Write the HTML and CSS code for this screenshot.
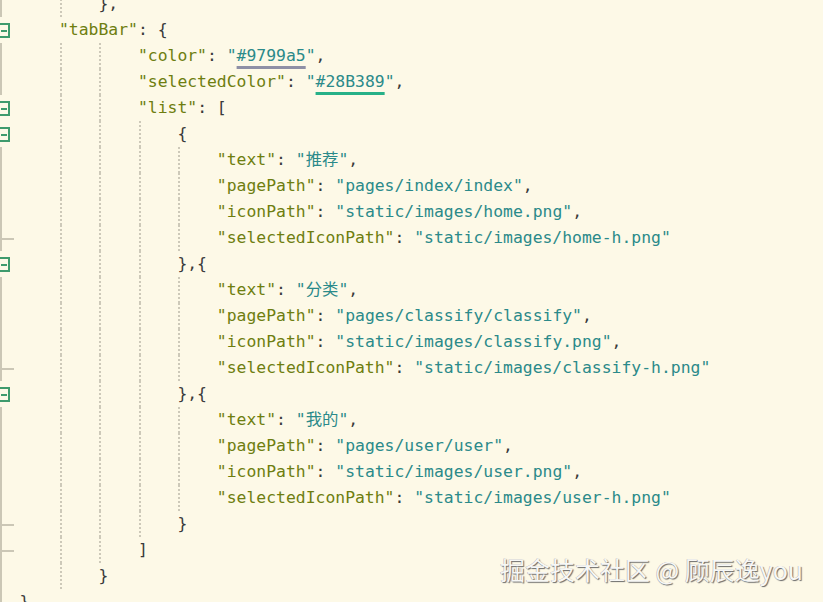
FILE: index.html
```html
<!DOCTYPE html>
<html lang="zh">
<head>
<meta charset="utf-8">
<title>pages.json</title>
<link rel="stylesheet" href="styles.css">
</head>
<body>
<div class="editor">
  <div class="line"><span class="gut vl"></span><span class="code"><span class="ind"></span><span class="ind g"></span><span class="p">},</span></span></div>
  <div class="line"><span class="gut"><span class="fold"></span></span><span class="code"><span class="ind"></span><span class="k">"tabBar"</span><span class="p">: {</span></span></div>
  <div class="line"><span class="gut vl"></span><span class="code"><span class="ind"></span><span class="ind g"></span><span class="ind g"></span><span class="k">"color"</span><span class="p">: </span><span class="s">"<span class="cu cu1">#9799a5</span>"</span><span class="p">,</span></span></div>
  <div class="line"><span class="gut vl"></span><span class="code"><span class="ind"></span><span class="ind g"></span><span class="ind g"></span><span class="k">"selectedColor"</span><span class="p">: </span><span class="s">"<span class="cu cu2">#28B389</span>"</span><span class="p">,</span></span></div>
  <div class="line"><span class="gut"><span class="fold"></span></span><span class="code"><span class="ind"></span><span class="ind g"></span><span class="ind g"></span><span class="k">"list"</span><span class="p">: [</span></span></div>
  <div class="line"><span class="gut"><span class="fold"></span></span><span class="code"><span class="ind"></span><span class="ind g"></span><span class="ind g"></span><span class="ind g"></span><span class="p">{</span></span></div>
  <div class="line"><span class="gut vl"></span><span class="code"><span class="ind"></span><span class="ind g"></span><span class="ind g"></span><span class="ind g"></span><span class="ind g"></span><span class="k">"text"</span><span class="p">: </span><span class="s">"推荐"</span><span class="p">,</span></span></div>
  <div class="line"><span class="gut vl"></span><span class="code"><span class="ind"></span><span class="ind g"></span><span class="ind g"></span><span class="ind g"></span><span class="ind g"></span><span class="k">"pagePath"</span><span class="p">: </span><span class="s">"pages/index/index"</span><span class="p">,</span></span></div>
  <div class="line"><span class="gut vl"></span><span class="code"><span class="ind"></span><span class="ind g"></span><span class="ind g"></span><span class="ind g"></span><span class="ind g"></span><span class="k">"iconPath"</span><span class="p">: </span><span class="s">"static/images/home.png"</span><span class="p">,</span></span></div>
  <div class="line"><span class="gut vl tick"></span><span class="code"><span class="ind"></span><span class="ind g"></span><span class="ind g"></span><span class="ind g"></span><span class="ind g"></span><span class="k">"selectedIconPath"</span><span class="p">: </span><span class="s">"static/images/home-h.png"</span></span></div>
  <div class="line"><span class="gut"><span class="fold"></span></span><span class="code"><span class="ind"></span><span class="ind g"></span><span class="ind g"></span><span class="ind g"></span><span class="p">},{</span></span></div>
  <div class="line"><span class="gut vl"></span><span class="code"><span class="ind"></span><span class="ind g"></span><span class="ind g"></span><span class="ind g"></span><span class="ind g"></span><span class="k">"text"</span><span class="p">: </span><span class="s">"分类"</span><span class="p">,</span></span></div>
  <div class="line"><span class="gut vl"></span><span class="code"><span class="ind"></span><span class="ind g"></span><span class="ind g"></span><span class="ind g"></span><span class="ind g"></span><span class="k">"pagePath"</span><span class="p">: </span><span class="s">"pages/classify/classify"</span><span class="p">,</span></span></div>
  <div class="line"><span class="gut vl"></span><span class="code"><span class="ind"></span><span class="ind g"></span><span class="ind g"></span><span class="ind g"></span><span class="ind g"></span><span class="k">"iconPath"</span><span class="p">: </span><span class="s">"static/images/classify.png"</span><span class="p">,</span></span></div>
  <div class="line"><span class="gut vl tick"></span><span class="code"><span class="ind"></span><span class="ind g"></span><span class="ind g"></span><span class="ind g"></span><span class="ind g"></span><span class="k">"selectedIconPath"</span><span class="p">: </span><span class="s">"static/images/classify-h.png"</span></span></div>
  <div class="line"><span class="gut"><span class="fold"></span></span><span class="code"><span class="ind"></span><span class="ind g"></span><span class="ind g"></span><span class="ind g"></span><span class="p">},{</span></span></div>
  <div class="line"><span class="gut vl"></span><span class="code"><span class="ind"></span><span class="ind g"></span><span class="ind g"></span><span class="ind g"></span><span class="ind g"></span><span class="k">"text"</span><span class="p">: </span><span class="s">"我的"</span><span class="p">,</span></span></div>
  <div class="line"><span class="gut vl"></span><span class="code"><span class="ind"></span><span class="ind g"></span><span class="ind g"></span><span class="ind g"></span><span class="ind g"></span><span class="k">"pagePath"</span><span class="p">: </span><span class="s">"pages/user/user"</span><span class="p">,</span></span></div>
  <div class="line"><span class="gut vl"></span><span class="code"><span class="ind"></span><span class="ind g"></span><span class="ind g"></span><span class="ind g"></span><span class="ind g"></span><span class="k">"iconPath"</span><span class="p">: </span><span class="s">"static/images/user.png"</span><span class="p">,</span></span></div>
  <div class="line"><span class="gut vl"></span><span class="code"><span class="ind"></span><span class="ind g"></span><span class="ind g"></span><span class="ind g"></span><span class="ind g"></span><span class="k">"selectedIconPath"</span><span class="p">: </span><span class="s">"static/images/user-h.png"</span></span></div>
  <div class="line"><span class="gut vl tick"></span><span class="code"><span class="ind"></span><span class="ind g"></span><span class="ind g"></span><span class="ind g"></span><span class="p">}</span></span></div>
  <div class="line"><span class="gut vl tick"></span><span class="code"><span class="ind"></span><span class="ind g"></span><span class="ind g"></span><span class="p">]</span></span></div>
  <div class="line"><span class="gut vl"></span><span class="code"><span class="ind"></span><span class="ind g"></span><span class="p">}</span></span></div>
  <div class="line"><span class="gut vl tick"></span><span class="code"><span class="p">}</span></span></div>
</div>
<div class="watermark">掘金技术社区 @ 顾辰逸you</div>
</body>
</html>
```

FILE: styles.css
```css
html, body {
  margin: 0;
  padding: 0;
  background: #fdf9e7;
  overflow: hidden;
  height: 100%;
}
body {
  position: relative;
  width: 823px;
  height: 602px;
}
.editor {
  margin-top: -9px;
  font-family: "DejaVu Sans Mono", "Noto Sans CJK SC", monospace;
  font-size: 16.4px;
  color: #3a3a3a;
}
.line {
  display: flex;
  height: 26px;
  line-height: 26px;
  white-space: pre;
}
.gut {
  flex: none;
  width: 19.5px;
  height: 26px;
  position: relative;
}
.gut.vl {
  background: linear-gradient(#cbc7b6, #cbc7b6) 0 0 / 2px 100% no-repeat;
}
.gut.vl.tick {
  background:
    linear-gradient(#cbc7b6, #cbc7b6) 0 0 / 2px 100% no-repeat,
    linear-gradient(#cbc7b6, #cbc7b6) 0 13px / 14px 2px no-repeat;
}
.fold {
  display: block;
  box-sizing: border-box;
  margin: 6px 0 0 -2px;
  width: 12px;
  height: 15px;
  border: 2px solid #3f9b6d;
  position: relative;
}
.fold::after {
  content: "";
  position: absolute;
  left: 1px;
  right: 1px;
  top: 4.5px;
  height: 2px;
  background: #3f9b6d;
}
.code {
  display: flex;
  align-items: flex-start;
}
.ind {
  display: inline-block;
  width: 4ch;
  height: 26px;
  flex: none;
}
.ind.g {
  background: repeating-linear-gradient(to bottom, #cdc9b9 0 2px, transparent 2px 4px) 1px 0 / 2px 100% no-repeat;
}
.k { color: #6e7e10; }
.s { color: #2b8a8a; }
.p { color: #3a3a3a; }
.cu {
  text-decoration: underline;
  text-decoration-thickness: 3px;
  text-underline-offset: 5px;
}
.cu1 { text-decoration-color: #8f90a6; }
.cu2 { text-decoration-color: #27b188; }
.watermark {
  position: absolute;
  right: 20px;
  bottom: 17px;
  font-family: "Noto Sans CJK SC", "Noto Sans", sans-serif;
  font-size: 25px;
  line-height: 32px;
  color: #f7f7f5;
  text-shadow: 1px 1px 1px #6a6a6a, -0.5px -0.5px 0 #b0b0b0;
  white-space: nowrap;
}
```
